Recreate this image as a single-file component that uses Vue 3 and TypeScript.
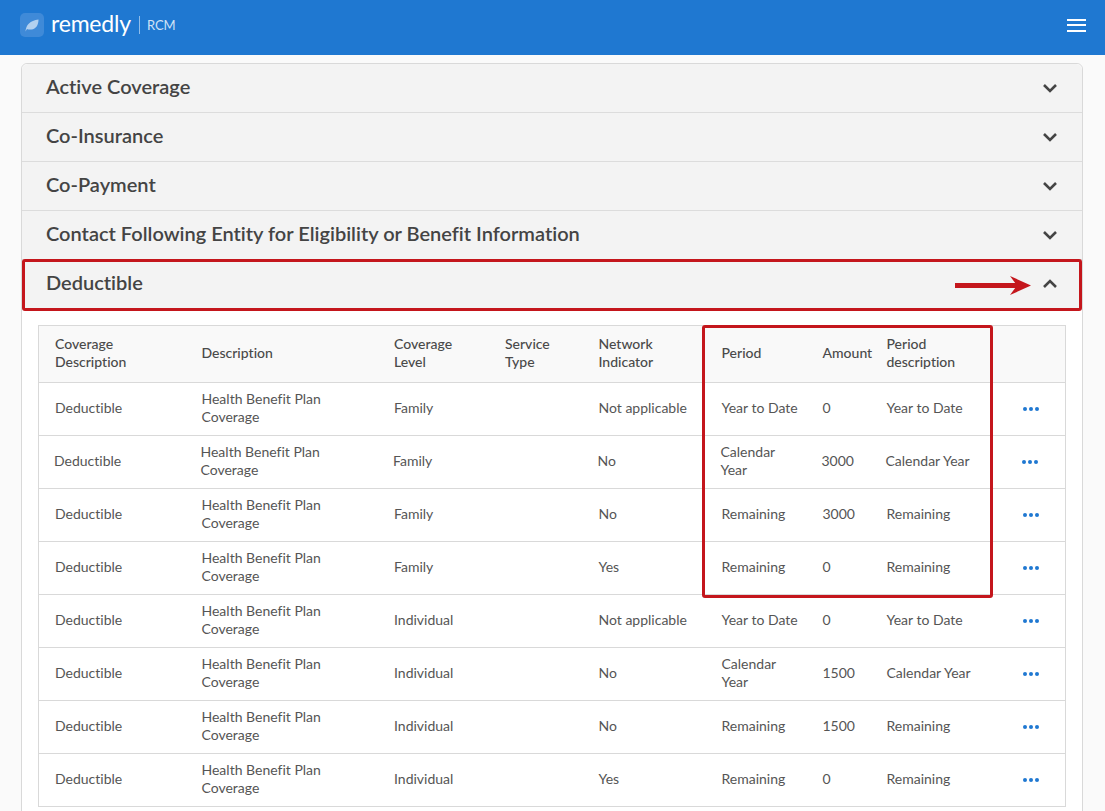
<script setup lang="ts">
interface BenefitRow {
  level: string;
  network: string;
  period: string;
  amount: string;
  periodDesc: string;
  nudge?: boolean;
}

const sections = [
  'Active Coverage',
  'Co-Insurance',
  'Co-Payment',
  'Contact Following Entity for Eligibility or Benefit Information',
];

const rows: BenefitRow[] = [
  { level: 'Family', network: 'Not applicable', period: 'Year to Date', amount: '0', periodDesc: 'Year to Date' },
  { level: 'Family', network: 'No', period: 'Calendar Year', amount: '3000', periodDesc: 'Calendar Year', nudge: true },
  { level: 'Family', network: 'No', period: 'Remaining', amount: '3000', periodDesc: 'Remaining' },
  { level: 'Family', network: 'Yes', period: 'Remaining', amount: '0', periodDesc: 'Remaining' },
  { level: 'Individual', network: 'Not applicable', period: 'Year to Date', amount: '0', periodDesc: 'Year to Date' },
  { level: 'Individual', network: 'No', period: 'Calendar Year', amount: '1500', periodDesc: 'Calendar Year' },
  { level: 'Individual', network: 'No', period: 'Remaining', amount: '1500', periodDesc: 'Remaining' },
  { level: 'Individual', network: 'Yes', period: 'Remaining', amount: '0', periodDesc: 'Remaining' },
];
</script>

<template>
  <div class="page">
    <header class="topbar">
      <div class="brand">
        <span class="logo-mark">
          <svg width="14" height="13" viewBox="0 0 14 13">
            <path d="M0.500 12.500C1 6 5 1.500 13.500 0.500c0 5.500-2.500 9.500-7 10C4.500 10.700 3 10.500 2 10z" fill="#fff" fill-opacity="0.6" />
          </svg>
        </span>
        <span class="logo-text">remedly</span>
        <span class="logo-sep"></span>
        <span class="logo-sub">RCM</span>
      </div>
      <button class="menu-btn" aria-label="Menu">
        <span class="bar"></span>
        <span class="bar"></span>
        <span class="bar"></span>
      </button>
    </header>

    <main class="content">
      <section class="panel">
        <div v-for="name in sections" :key="name" class="section-head">
          <span class="section-title">{{ name }}</span>
          <svg class="chevron" width="16" height="10" viewBox="0 0 16 10">
            <path d="M2 2l6 6 6-6" fill="none" stroke="#444" stroke-width="2.600" />
          </svg>
        </div>

        <div class="section-head open">
          <span class="section-title">Deductible</span>
          <svg class="arrow" width="78" height="24" viewBox="0 0 78 24">
            <path d="M0 10h64v5H0z" fill="#c4161c" />
            <path d="M55 3l21 9.500-21 9.500 7-9.500z" fill="#c4161c" />
          </svg>
          <svg class="chevron" width="16" height="10" viewBox="0 0 16 10">
            <path d="M2 8l6-6 6 6" fill="none" stroke="#444" stroke-width="2.600" />
          </svg>
          <div class="mark mark-head"></div>
        </div>

        <div class="section-body">
          <div class="table-wrap">
            <table class="benefits">
              <colgroup>
                <col style="width: 147px" />
                <col style="width: 192.500px" />
                <col style="width: 111px" />
                <col style="width: 93.500px" />
                <col style="width: 123px" />
                <col style="width: 101px" />
                <col style="width: 64px" />
                <col style="width: 135px" />
                <col />
              </colgroup>
              <thead>
                <tr>
                  <th>Coverage Description</th>
                  <th>Description</th>
                  <th>Coverage Level</th>
                  <th>Service Type</th>
                  <th>Network Indicator</th>
                  <th>Period</th>
                  <th>Amount</th>
                  <th>Period description</th>
                  <th></th>
                </tr>
              </thead>
              <tbody>
                <tr v-for="(row, i) in rows" :key="i" :class="{ nudge: row.nudge }">
                  <td>Deductible</td>
                  <td>Health Benefit Plan Coverage</td>
                  <td>{{ row.level }}</td>
                  <td></td>
                  <td>{{ row.network }}</td>
                  <td>{{ row.period }}</td>
                  <td>{{ row.amount }}</td>
                  <td>{{ row.periodDesc }}</td>
                  <td>
                    <span class="dots"><i></i><i></i><i></i></span>
                  </td>
                </tr>
              </tbody>
            </table>
            <div class="mark mark-cols"></div>
          </div>
        </div>
      </section>
    </main>
  </div>
</template>

<style scoped>
.page {
  height: 811px;
  overflow: hidden;
  background: #fafafa;
  font-family: Lato, "Open Sans", sans-serif;
  font-variant-ligatures: none;
  color: #4a4a4a;
}

.topbar {
  height: 55px;
  background: #1f78d1;
  display: flex;
  align-items: center;
  justify-content: space-between;
  padding: 0 19px 0 20px;
}

.brand {
  display: flex;
  align-items: center;
  color: #fff;
}

.logo-mark {
  width: 24px;
  height: 24px;
  margin-top: -5px;
  border-radius: 5px;
  background: #3f8ad8;
  display: flex;
  align-items: center;
  justify-content: center;
}

.logo-text {
  margin-left: 7px;
  margin-top: -9px;
  font-size: 23px;
  line-height: 28px;
  letter-spacing: -0.2px;
}

.logo-sep {
  width: 1px;
  height: 18px;
  margin: -5px 7px 0 8px;
  background: #8fbdea;
}

.logo-sub {
  margin-top: -6px;
  font-size: 13px;
  color: #cfe2f6;
}

.menu-btn {
  width: 19px;
  height: 13px;
  margin-top: -5px;
  padding: 0;
  border: none;
  background: transparent;
  display: flex;
  flex-direction: column;
  justify-content: space-between;
}

.bar {
  display: block;
  height: 2px;
  background: #fff;
}

.content {
  padding: 8px 22px 0 21px;
}

.panel {
  border: 1px solid #d9d9d9;
  border-radius: 6px 6px 0 0;
  background: #fff;
}

.section-head {
  position: relative;
  height: 49px;
  box-sizing: border-box;
  padding: 0 24px;
  display: flex;
  align-items: center;
  justify-content: space-between;
  background: #f3f3f3;
  border-bottom: 1px solid #dcdcdc;
  font-size: 20px;
  font-weight: 600;
  color: #444;
}

.section-head:first-child {
  border-radius: 6px 6px 0 0;
}

.section-title {
  margin-bottom: 4px;
}

.chevron {
  flex: none;
}

.arrow {
  position: absolute;
  left: 933px;
  top: 13px;
}

.mark {
  position: absolute;
  border: 3px solid #c4161c;
  border-radius: 3px;
  pointer-events: none;
}

.mark-head {
  left: 0;
  right: 0;
  top: -1px;
  bottom: -3px;
}

.section-body {
  padding: 16px 16px 40px;
}

.table-wrap {
  position: relative;
}

.benefits {
  width: 100%;
  table-layout: fixed;
  border-collapse: collapse;
  border: 1px solid #d9d9d9;
  font-size: 14px;
  line-height: 18px;
}

.benefits th {
  height: 57px;
  box-sizing: border-box;
  padding: 0 8px 2px 16px;
  text-align: left;
  font-weight: 500;
  background: #f9f9f9;
  border-bottom: 1px solid #d9d9d9;
}

.benefits td {
  height: 53px;
  box-sizing: border-box;
  padding: 0 8px 2px 16px;
  border-bottom: 1px solid #d9d9d9;
  color: #555;
}

.benefits tr.nudge td {
  padding-left: 15px;
}

.dots {
  display: flex;
  gap: 2px;
  margin-left: 1px;
  padding-top: 2px;
}

.dots i {
  width: 4px;
  height: 4px;
  border-radius: 50%;
  background: #1f78d1;
}

.mark-cols {
  left: 664px;
  width: 285px;
  top: 0;
  height: 267px;
}
</style>

<style>
html,
body {
  margin: 0;
  overflow: hidden;
}
</style>
